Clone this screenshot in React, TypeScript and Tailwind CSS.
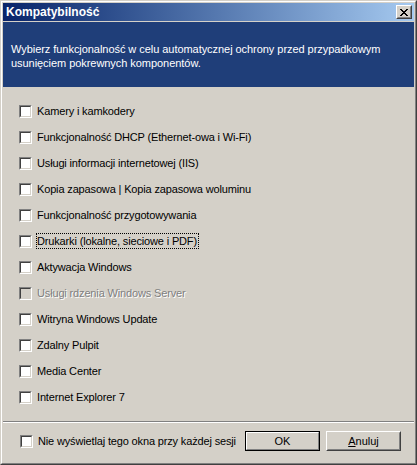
import React from "react";

const ITEMS = [
  { label: "Kamery i kamkodery" },
  { label: "Funkcjonalność DHCP (Ethernet-owa i Wi-Fi)" },
  { label: "Usługi informacji internetowej (IIS)" },
  { label: "Kopia zapasowa | Kopia zapasowa woluminu" },
  { label: "Funkcjonalność przygotowywania" },
  { label: "Drukarki (lokalne, sieciowe i PDF)", focused: true },
  { label: "Aktywacja Windows" },
  { label: "Usługi rdzenia Windows Server", disabled: true },
  { label: "Witryna Windows Update" },
  { label: "Zdalny Pulpit" },
  { label: "Media Center" },
  { label: "Internet Explorer 7" },
];

function Box({ disabled }: { disabled?: boolean }) {
  return (
    <span className="block w-[13px] h-[13px] shrink-0 border border-t-[#808080] border-l-[#808080] border-b-white border-r-white">
      <span
        className={`block w-full h-full border border-t-[#404040] border-l-[#404040] border-b-[#d4d0c8] border-r-[#d4d0c8] ${
          disabled ? "bg-[#d4d0c8]" : "bg-white"
        }`}
      />
    </span>
  );
}

function CloseButton() {
  return (
    <div className="w-[16px] h-[14px] bg-[#d4d0c8] border border-t-white border-l-white border-b-[#404040] border-r-[#404040]">
      <div className="w-full h-full border border-t-[#d4d0c8] border-l-[#d4d0c8] border-b-[#808080] border-r-[#808080] flex items-center justify-center">
        <svg width="8" height="7" viewBox="0 0 8 7" shapeRendering="crispEdges">
          <path d="M0 0h2v1H0zM6 0h2v1H6zM1 1h2v1H1zM5 1h2v1H5zM2 2h4v1H2zM3 3h2v1H3zM2 4h4v1H2zM1 5h2v1H1zM5 5h2v1H5zM0 6h2v1H0zM6 6h2v1H6z" fill="#000" />
        </svg>
      </div>
    </div>
  );
}

export default function App() {
  return (
    <div className="w-[417px] h-[465px] bg-[#d4d0c8] font-['Liberation_Sans',Arial,sans-serif] text-[11px] text-black leading-[14px] border border-t-[#d4d0c8] border-l-[#d4d0c8] border-b-[#404040] border-r-[#404040]">
      <div className="w-full h-full border border-t-white border-l-white border-b-[#808080] border-r-[#808080] p-px flex flex-col">
        {/* title bar */}
        <div className="h-[18px] shrink-0 bg-linear-to-r from-[#0a246a] to-[#a6caf0] flex items-center justify-between pl-[3px] pr-[2px]">
          <span className="text-white font-bold text-[12px]">Kompatybilność</span>
          <CloseButton />
        </div>
        <div className="h-px shrink-0" />

        {/* header */}
        <div className="h-[65px] shrink-0 bg-[#1f3e79] text-white pl-[8px] pt-[20px] tracking-[-0.05px]">
          Wybierz funkcjonalność w celu automatycznej ochrony przed przypadkowym
          <br />
          usunięciem pokrewnych komponentów.
        </div>

        {/* options */}
        <div className="pt-[11px] pl-[16px] flex flex-col tracking-[-0.15px]">
          {ITEMS.map((it) => (
            <div key={it.label} className={`h-[26px] flex items-center ${it.focused ? "gap-[4px]" : "gap-[5px]"}`}>
              <Box disabled={it.disabled} />
              {it.focused ? (
                <span className="border border-dotted border-black pr-px">{it.label}</span>
              ) : (
                <span className={it.disabled ? "text-[#808080] [text-shadow:1px_1px_0_#ffffff]" : ""}>{it.label}</span>
              )}
            </div>
          ))}
        </div>

        {/* separator */}
        <div className="mt-[11px] h-[2px] shrink-0 border-t border-t-[#808080] border-b border-b-white" />

        {/* footer */}
        <div className="pt-[8px] pl-[17px] pr-[13px] flex items-start">
          <div className="h-[20px] flex items-center gap-[5px] tracking-[-0.15px]">
            <Box />
            <span>Nie wyświetlaj tego okna przy każdej sesji</span>
          </div>
          <div className="ml-auto flex gap-[6px]">
            <div className="w-[75px] h-[20px] border border-black">
              <div className="w-full h-full border border-t-white border-l-white border-b-[#808080] border-r-[#808080] flex items-center justify-center">
                OK
              </div>
            </div>
            <div className="w-[75px] h-[20px] border border-t-white border-l-white border-b-[#404040] border-r-[#404040]">
              <div className="w-full h-full border border-t-[#d4d0c8] border-l-[#d4d0c8] border-b-[#808080] border-r-[#808080] flex items-center justify-center">
                <span>
                  <span className="underline">A</span>nuluj
                </span>
              </div>
            </div>
          </div>
        </div>
      </div>
    </div>
  );
}
